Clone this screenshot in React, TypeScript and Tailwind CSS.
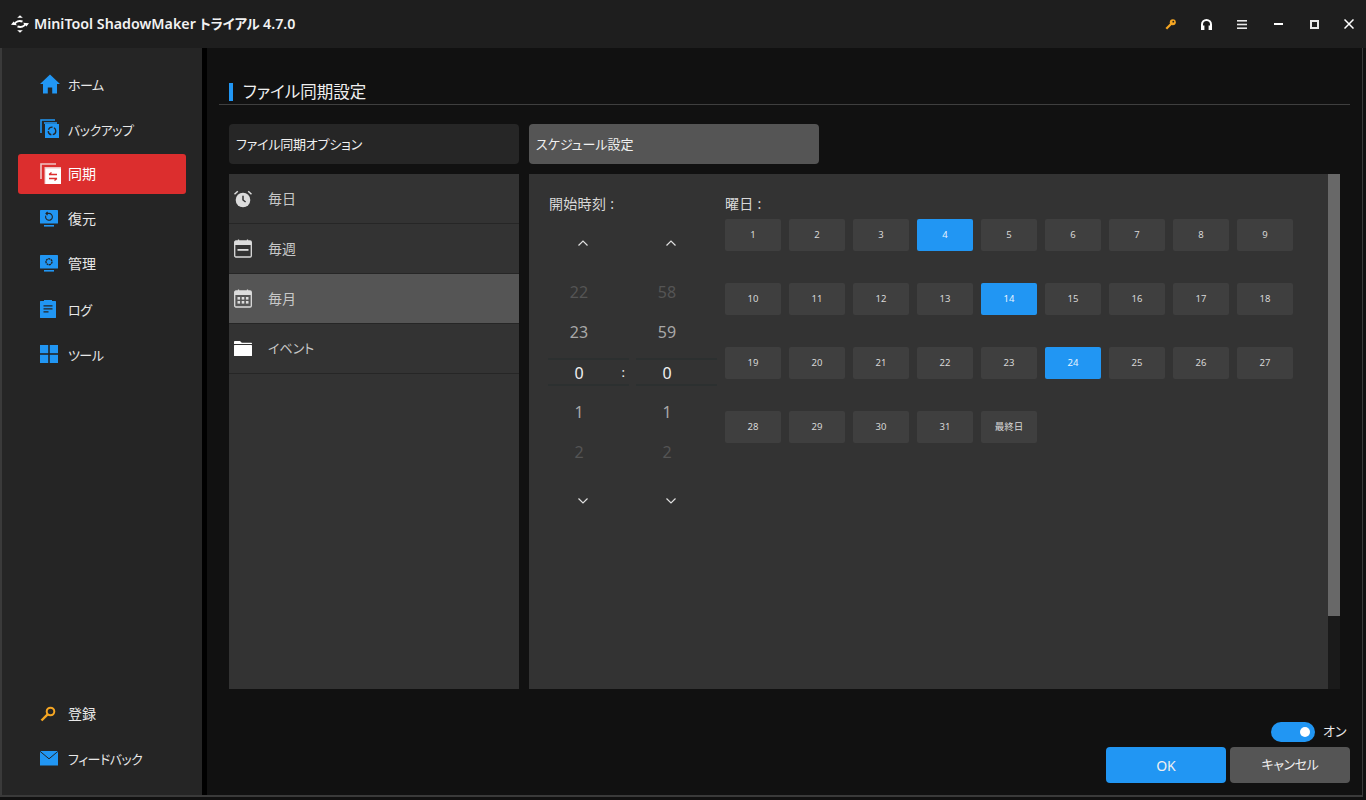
import type { ReactNode } from "react";

const FONT = "font-['Noto_Sans','Noto_Sans_CJK_JP',sans-serif] [font-feature-settings:'palt']";

const DAYS = [
  "1", "2", "3", "4", "5", "6", "7", "8", "9",
  "10", "11", "12", "13", "14", "15", "16", "17", "18",
  "19", "20", "21", "22", "23", "24", "25", "26", "27",
  "28", "29", "30", "31", "最終日",
];
const ACTIVE_DAYS = ["4", "14", "24"];

function Logo() {
  return (
    <svg width="18" height="18" viewBox="0 0 18 18" fill="none" stroke="#fff" strokeWidth="2">
      <path d="M6.200 2.800 9 .3l2.800 2.500z" fill="#fff" stroke="none" />
      <path d="M6.200 15.200 9 17.700l2.800-2.500z" fill="#fff" stroke="none" />
      <path d="M3.500 9.500C4.500 6.500 8 5.500 11.500 6.500" />
      <path d="M14.500 8.500C13.500 11.500 10 12.500 6.500 11.500" />
      <path d="M0 9.800 2.600 6.400 6 10.200z" fill="#fff" stroke="none" />
      <path d="M18 8.200 15.400 11.600 12 7.800z" fill="#fff" stroke="none" />
    </svg>
  );
}

function HomeIcon() {
  return (
    <svg width="20" height="20" viewBox="0 0 20 20" fill="#2196f3">
      <path d="M10 .6 0 10h3v9.400h4.800v-6h4.400v6H17V10h3z" />
    </svg>
  );
}

function BackupIcon() {
  return (
    <svg width="20" height="20" viewBox="0 0 20 20" fill="none">
      <path d="M1 14V1h14" stroke="#2196f3" strokeWidth="1.600" />
      <path d="M4 4h13" stroke="#2196f3" strokeWidth="1.600" />
      <rect x="5" y="5" width="14" height="14" fill="#2196f3" />
      <circle cx="12" cy="12" r="3.800" stroke="#252525" strokeWidth="1.300" strokeDasharray="5 1.500" />
    </svg>
  );
}

function SyncIcon() {
  return (
    <svg width="22" height="22" viewBox="0 0 22 22" fill="none">
      <path d="M1 16V1h15" stroke="#eec4c4" strokeWidth="1.600" />
      <rect x="4.500" y="4" width="16.500" height="17" fill="#eec4c4" />
      <rect x="5.500" y="5.500" width="15.500" height="15.500" fill="#fff" />
      <path d="M9 11.500h8M9 11.500l2.500-2" stroke="#dc2e2e" strokeWidth="1.300" />
      <path d="M17 15.500H9M17 15.500l-2.500 2" stroke="#dc2e2e" strokeWidth="1.300" />
    </svg>
  );
}

function MonitorIcon({ gear }: { gear?: boolean }) {
  return (
    <svg width="18" height="18" viewBox="0 0 18 18" fill="none">
      <rect x="0" y="0" width="18" height="13.600" rx="0.600" fill="#2196f3" />
      <rect x="4" y="15" width="10" height="1.600" fill="#2196f3" />
      {gear ? (
        <circle cx="9" cy="6.800" r="3" stroke="#252525" strokeWidth="1.400" strokeDasharray="2 0.600" />
      ) : (
        <path d="M5.800 5.600A3.400 3.400 0 1 0 8.600 3.400H6.400M7.600 1.800 6 3.400l1.600 1.600" stroke="#252525" strokeWidth="1.100" />
      )}
    </svg>
  );
}

function LogIcon() {
  return (
    <svg width="16" height="18" viewBox="0 0 16 18">
      <path d="M.6 1H4V0h8v1h3.400c.3 0 .6.3.6.6v15.800c0 .3-.3.6-.6.6H.6c-.3 0-.6-.3-.6-.6V1.600C0 1.300.3 1 .6 1z" fill="#2196f3" />
      <path d="M3.500 5.800h9M3.500 8.800h9M3.500 11.800h5" stroke="#252525" strokeWidth="1.200" />
    </svg>
  );
}

function ToolsIcon() {
  return (
    <svg width="18" height="18" viewBox="0 0 18 18" fill="#2196f3">
      <rect x="0" y="0" width="8.200" height="8.200" />
      <rect x="9.800" y="0" width="8.200" height="8.200" />
      <rect x="0" y="9.800" width="8.200" height="8.200" />
      <rect x="9.800" y="9.800" width="8.200" height="8.200" />
    </svg>
  );
}

function KeyIcon() {
  return (
    <svg width="16" height="16" viewBox="0 0 16 16" fill="none" stroke="#f5a623">
      <circle cx="10.500" cy="5.500" r="3.800" strokeWidth="2" />
      <path d="M7.600 8.400 1.500 14.500" strokeWidth="2.400" />
    </svg>
  );
}

function SmallKeyIcon() {
  return (
    <svg width="11" height="11" viewBox="0 0 11 11" fill="none">
      <circle cx="7.800" cy="3.200" r="3" fill="#f5a623" />
      <path d="M6.200 3.200 .5 8.900 2.100 10.500 7.800 4.800z" fill="#f5a623" />
      <circle cx="8.300" cy="2.700" r="0.900" fill="#1e1e1e" />
    </svg>
  );
}

function HeadsetIcon() {
  return (
    <svg width="11" height="11" viewBox="0 0 11 11" fill="none" stroke="#fff" strokeWidth="2">
      <path d="M1 8V5.500a4.500 4.500 0 0 1 9 0V8" />
      <rect x="0" y="6.500" width="3.400" height="4.500" fill="#fff" stroke="none" />
      <rect x="7.600" y="6.500" width="3.400" height="4.500" fill="#fff" stroke="none" />
    </svg>
  );
}

function MailIcon() {
  return (
    <svg width="18" height="15" viewBox="0 0 18 15">
      <path d="M0 0h18v14.500H0z" fill="#2196f3" />
      <path d="M0 .3 9 7.800 18 .3" fill="none" stroke="#252525" strokeWidth="1" />
    </svg>
  );
}

function AlarmIcon() {
  return (
    <svg width="18" height="18" viewBox="0 0 18 18" fill="#dcdcdc">
      <circle cx="9" cy="10" r="7.300" />
      <path d="M9 5.800V10l2.600 2" fill="none" stroke="#333" strokeWidth="1.500" />
      <path d="M.5 4.300 3.800 1.200M17.500 4.300 14.200 1.200" stroke="#dcdcdc" strokeWidth="1.500" />
    </svg>
  );
}

function CalendarIcon({ month }: { month?: boolean }) {
  return (
    <svg width="18" height="19" viewBox="0 0 18 19" fill="none">
      <rect x="0.700" y="2" width="16.600" height="16" rx="1.200" stroke="#dcdcdc" strokeWidth="1.300" />
      <path d="M0.700 6h16.600V3.200c0-.7-.5-1.200-1.200-1.200H1.900C1.200 2 .7 2.500.7 3.200z" fill="#dcdcdc" />
      <path d="M4.500 0.500v2.500M13.500 0.500v2.500" stroke="#dcdcdc" strokeWidth="1.300" />
      {month ? (
        <g fill="#dcdcdc">
          <rect x="3.500" y="8" width="2.600" height="2.600" />
          <rect x="7.700" y="8" width="2.600" height="2.600" />
          <rect x="11.900" y="8" width="2.600" height="2.600" />
          <rect x="3.500" y="12" width="2.600" height="2.600" />
          <rect x="7.700" y="12" width="2.600" height="2.600" />
          <rect x="11.900" y="12" width="2.600" height="2.600" />
        </g>
      ) : (
        <rect x="3.500" y="10" width="11" height="1.800" fill="#dcdcdc" />
      )}
    </svg>
  );
}

function FolderIcon() {
  return (
    <svg width="18" height="15" viewBox="0 0 18 15" fill="#fff">
      <path d="M0 1c0-.5.400-1 1-1h5l1.800 1.800H17c.6 0 1 .4 1 1V3H0z" />
      <rect x="0" y="4" width="18" height="11" rx="0.500" />
    </svg>
  );
}

function Chevron({ down }: { down?: boolean }) {
  return (
    <svg width="10" height="6" viewBox="0 0 10 6" fill="none" stroke="#e0e0e0" strokeWidth="1.200">
      <path d={down ? "M.5.500 5 5 9.500.500" : "M.5 5.500 5 1 9.500 5.500"} />
    </svg>
  );
}

function NavItem({ icon, label, active, kana }: { icon: ReactNode; label: string; active?: boolean; kana?: boolean }) {
  return (
    <div className={`h-10 w-[168px] ml-4 flex items-center rounded-[3px] ${active ? "bg-[#dc2e2e] text-white" : "text-[#e8e8e8]"}`}>
      <div className="w-[50px] pl-[22px] shrink-0 flex items-center">{icon}</div>
      <span className={kana ? "text-[13px] tracking-[-0.5px] pt-[3px]" : "text-[14px] pb-[2px]"}>{label}</span>
    </div>
  );
}

function OptionRow({ icon, label, active, kana }: { icon: ReactNode; label: string; active?: boolean; kana?: boolean }) {
  return (
    <div className={`h-[50px] flex items-center border-b border-[#262626] text-[#c8c8c8] ${active ? "bg-[#555555]" : ""}`}>
      <div className="w-[39px] pl-[5px] shrink-0 flex items-center">{icon}</div>
      <span className={kana ? "text-[13px]" : "text-[14px]"}>{label}</span>
    </div>
  );
}

function Spinner({ prev2, prev1, next1, next2, withColon }: { prev2: string; prev1: string; next1: string; next2: string; withColon?: boolean }) {
  return (
    <div className="w-[81px] flex flex-col text-[16px]">
      <div className="h-[22px] mb-[2px] flex justify-center pr-[11px] items-center">
        <Chevron />
      </div>
      <div className="h-[40px] mt-[16px] flex items-center justify-center pr-[19px] text-[#555555]">{prev2}</div>
      <div className="h-[40px] flex items-center justify-center pr-[19px] text-[#a8a8a8]">{prev1}</div>
      <div className="h-[28px] my-[6px] border-y-2 border-[#2c3030] relative flex items-center justify-center pr-[19px] pt-[1px] text-[#f0f0f0]">
        0
        {withColon && <span className="absolute right-[4px] text-[13px]">:</span>}
      </div>
      <div className="h-[40px] flex items-center justify-center pr-[19px] text-[#a8a8a8]">{next1}</div>
      <div className="h-[40px] flex items-center justify-center pr-[19px] text-[#555555]">{next2}</div>
      <div className="h-[24px] mt-[17px] flex justify-center pr-[11px] items-center">
        <Chevron down />
      </div>
    </div>
  );
}

export default function App() {
  return (
    <div className={`${FONT} w-[1366px] h-[800px] bg-[#111111] flex flex-col overflow-hidden`}>
      {/* title bar */}
      <div className="h-12 shrink-0 bg-[#1e1e1e] flex items-center pl-[11px] text-white">
        <Logo />
        <span className="ml-[5px] text-[14.250px] font-semibold text-[#f2f2f2] whitespace-nowrap">
          MiniTool ShadowMaker <span className="text-[13.500px] tracking-[-0.3px]">トライアル</span> 4.7.0
        </span>
        <div className="ml-auto flex items-center">
          <div className="w-[36px] flex justify-center"><SmallKeyIcon /></div>
          <div className="w-[36px] flex justify-center"><HeadsetIcon /></div>
          <div className="w-[36px] flex justify-center">
            <svg width="10" height="9" viewBox="0 0 10 9" fill="#e8e8e8">
              <rect width="10" height="1.600" />
              <rect y="3.700" width="10" height="1.600" />
              <rect y="7.400" width="10" height="1.600" />
            </svg>
          </div>
          <div className="w-[36px] flex justify-center">
            <div className="w-[9px] h-[2px] bg-white" />
          </div>
          <div className="w-[36px] flex justify-center">
            <div className="w-[9px] h-[9px] border-2 border-[#e8e8e8]" />
          </div>
          <div className="w-[34px] flex justify-center">
            <svg width="10" height="10" viewBox="0 0 10 10" stroke="#fff" strokeWidth="1.500">
              <path d="M.5.500l9 9M9.500.500l-9 9" />
            </svg>
          </div>
        </div>
      </div>

      <div className="flex-1 flex min-h-0 border-b-[2px] border-[#3a3a3a] mb-[3px] mr-[3px] border-r">
        {/* sidebar */}
        <div className="w-[202px] shrink-0 bg-[#252525] border-l-2 border-[#3a3a3a] flex flex-col pt-[16px] pb-[17px]">
          <div className="flex flex-col gap-[5px]">
            <NavItem icon={<HomeIcon />} label="ホーム" kana />
            <NavItem icon={<BackupIcon />} label="バックアップ" kana />
            <NavItem icon={<SyncIcon />} label="同期" active />
            <NavItem icon={<MonitorIcon />} label="復元" />
            <NavItem icon={<MonitorIcon gear />} label="管理" />
            <NavItem icon={<LogIcon />} label="ログ" kana />
            <NavItem icon={<ToolsIcon />} label="ツール" kana />
          </div>
          <div className="mt-auto flex flex-col gap-[4px]">
            <NavItem icon={<KeyIcon />} label="登録" />
            <NavItem icon={<MailIcon />} label="フィードバック" kana />
          </div>
        </div>
        <div className="w-[5px] shrink-0 bg-black" />

        {/* main */}
        <div className="flex-1 min-w-0 pt-[35px] flex flex-col">
          <div className="ml-[12px] mr-[12px] h-[22px] border-b border-[#3f3f3f] flex items-start pl-[10px]">
            <div className="w-[4px] h-[18px] bg-[#2196f3]" />
            <span className="ml-[10px] text-[16.500px] leading-[18px] text-[#f0f0f0]">ファイル同期設定</span>
          </div>

          <div className="mt-[19px] ml-[22px] flex gap-[10px] text-[13px] text-[#f0f0f0]">
            <div className="w-[290px] h-10 rounded-[4px] bg-[#262626] flex items-center pl-[7px] pt-[2px] tracking-[-0.2px]">ファイル同期オプション</div>
            <div className="w-[290px] h-10 rounded-[4px] bg-[#555555] flex items-center pl-[7px] pt-[2px]">スケジュール設定</div>
          </div>

          <div className="mt-[10px] ml-[22px] h-[515px] flex gap-[10px]">
            <div className="w-[290px] bg-[#333333]">
              <OptionRow icon={<AlarmIcon />} label="毎日" />
              <OptionRow icon={<CalendarIcon />} label="毎週" />
              <OptionRow icon={<CalendarIcon month />} label="毎月" active />
              <OptionRow icon={<FolderIcon />} label="イベント" kana />
            </div>

            <div className="w-[811px] flex">
              <div className="w-[799px] bg-[#333333] pl-[20px] pt-[20px] flex">
                <div className="w-[176px] shrink-0">
                  <div className="h-[20px] text-[14px] leading-[20px] text-[#d8d8d8] tracking-[0.3px]">開始時刻 :</div>
                  <div className="mt-[18px] -ml-[1px] flex gap-[7px]">
                    <Spinner prev2="22" prev1="23" next1="1" next2="2" withColon />
                    <Spinner prev2="58" prev1="59" next1="1" next2="2" />
                  </div>
                </div>
                <div>
                  <div className="h-[20px] text-[14px] leading-[20px] text-[#d8d8d8] tracking-[0.3px]">曜日 :</div>
                  <div className="mt-[5px] grid grid-cols-[repeat(9,56px)] auto-rows-[32px] gap-x-[8px] gap-y-[32px]">
                    {DAYS.map((d) => (
                      <div
                        key={d}
                        className={`rounded-[2px] flex items-center justify-center text-[9.500px] ${
                          ACTIVE_DAYS.includes(d) ? "bg-[#2196f3] text-[#e8f4ff]" : "bg-[#3f3f3f] text-[#d8d8d8]"
                        }`}
                      >
                        {d}
                      </div>
                    ))}
                  </div>
                </div>
              </div>
              {/* scrollbar */}
              <div className="w-[12px] bg-[#1a1a1a]">
                <div className="h-[442px] bg-[#686868]" />
              </div>
            </div>
          </div>

          <div className="mt-[33px] pr-[16px] flex items-center justify-end h-[20px]">
            <div className="w-[44px] h-[20px] rounded-full bg-[#2196f3] flex items-center justify-end pr-[5px]">
              <div className="w-[10px] h-[10px] rounded-full bg-white" />
            </div>
            <span className="ml-[8px] w-[23px] whitespace-nowrap text-[13px] text-[#e8e8e8]">オン</span>
          </div>
          <div className="mt-[5px] pr-[12px] flex justify-end gap-[4px] text-[14px] text-[#f0f0f0]">
            <div className="w-[120px] h-[36px] rounded-[4px] bg-[#2196f3] flex items-center justify-center">OK</div>
            <div className="w-[120px] h-[36px] rounded-[4px] bg-[#555555] flex items-center justify-center text-[13px] tracking-[-0.4px]">キャンセル</div>
          </div>
        </div>
      </div>
    </div>
  );
}
